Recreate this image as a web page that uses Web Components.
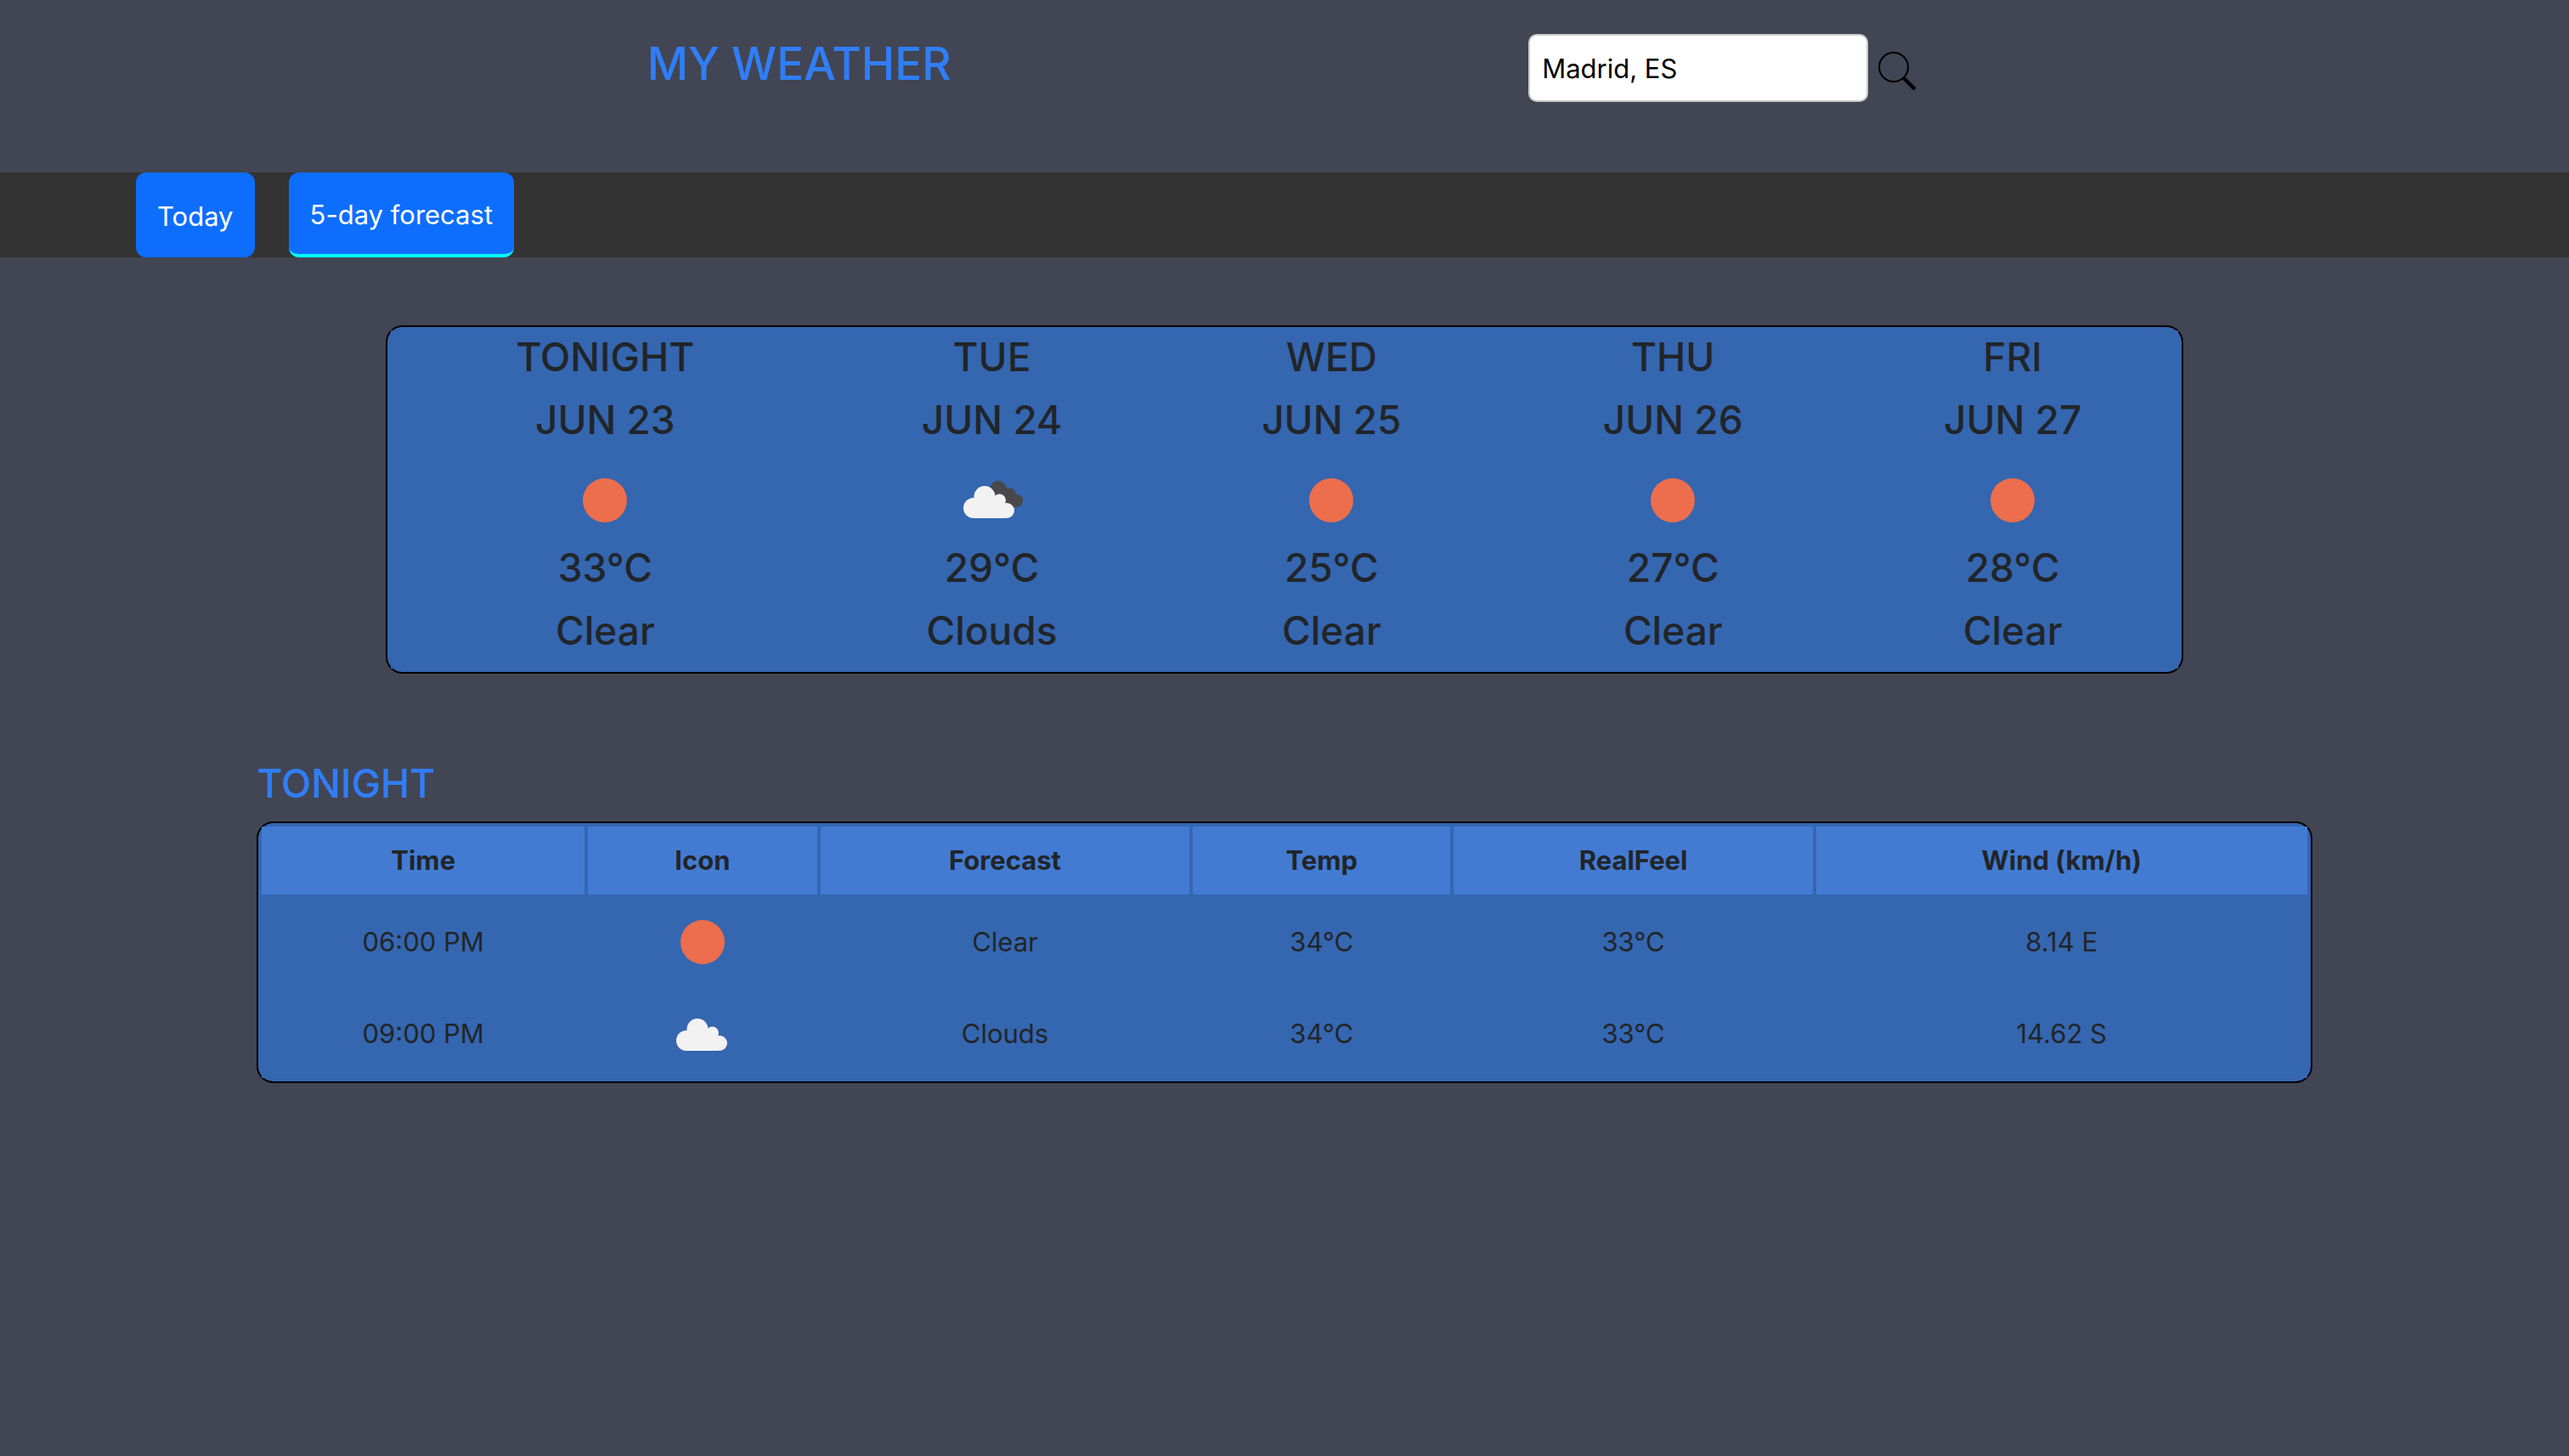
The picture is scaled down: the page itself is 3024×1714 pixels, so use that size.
<!DOCTYPE html>
<html lang="en">
<head>
<meta charset="utf-8">
<meta name="viewport" content="width=device-width, initial-scale=1">
<title>My Weather</title>
<style>
  html, body { margin: 0; min-height: 100%; }
  body {
    background: #424553;
    color: #212529;
    font-family: Inter, "Liberation Sans", sans-serif;
    font-size: 31px;
    line-height: 48px;
    --accent: #307ef6;
    --panel: #3566b0;
    --panel-head: #437bd3;
    --button: #0d6efd;
  }
</style>
</head>
<body>
<weather-app></weather-app>

<script>
class BaseElement extends HTMLElement {
  connectedCallback() {
    if (!this.shadowRoot) {
      this.attachShadow({ mode: "open" }).innerHTML = this.render();
    }
  }
}

class WeatherIcon extends BaseElement {
  render() {
    const cloud = `
      <circle cx="12" cy="26" r="12"/>
      <circle cx="25" cy="12.500" r="12.500"/>
      <circle cx="42.500" cy="17" r="7.500"/>
      <circle cx="51" cy="29" r="9"/>
      <path d="M12 15H38L49 20V38H12z"/>`;
    const art = {
      clear: `<circle cx="50" cy="50" r="26" fill="#ec6e4c"/>`,
      clouds: `<g transform="translate(19 32)" fill="#f2f2f2">${cloud}</g>`,
      broken: `
        <g fill="#48484a">
          <circle cx="57" cy="36.500" r="9.500"/>
          <circle cx="71" cy="42" r="6.500"/>
          <circle cx="78.500" cy="50.500" r="7.500"/>
          <path d="M50 42L66 34L80 46L78 58H70z"/>
        </g>
        <g transform="translate(16 33)" fill="#f2f2f2">${cloud}</g>`
    };
    return `
      <style>
        :host { display: block; width: 100px; height: 100px; margin: 0 auto; }
        svg { display: block; width: 100%; height: 100%; }
      </style>
      <svg viewBox="0 0 100 100" aria-hidden="true">${art[this.getAttribute("kind")]}</svg>`;
  }
}

class SearchBox extends BaseElement {
  render() {
    return `
      <style>
        :host { display: block; }
        form { display: flex; align-items: center; gap: 8px; margin: 0; }
        input {
          box-sizing: border-box; width: 400px; height: 80px; padding: 0 14px;
          border: 2px solid #ccc; border-radius: 10px;
          background: #fff; color: #000; font: inherit;
        }
        button { padding: 0; border: 0; background: none; cursor: pointer; }
        svg { display: block; width: 52px; height: 52px; }
      </style>
      <form onsubmit="return false">
        <input id="city" type="text" value="Madrid, ES" aria-label="City">
        <button type="submit" aria-label="Search">
          <svg viewBox="0 0 52 52" fill="none" stroke="#000">
            <circle cx="22" cy="25" r="17" stroke-width="2"/>
            <path d="M33 37 L47 51" stroke-width="4.500"/>
          </svg>
        </button>
      </form>`;
  }
}

class SiteHeader extends BaseElement {
  render() {
    return `
      <style>
        :host { display: block; }
        header {
          display: grid; grid-template-columns: 143fr 102fr;
          padding: 40px 0 83px 82px;
        }
        h1 {
          margin: 0; text-align: center; color: var(--accent);
          font-size: 53px; line-height: 70px; font-weight: 500;
        }
      </style>
      <header>
        <h1>MY WEATHER</h1>
        <search-box></search-box>
      </header>`;
  }
}

class NavTab extends BaseElement {
  render() {
    return `
      <style>
        :host { display: flex; }
        button {
          box-sizing: border-box; height: 100px; padding: 4px 25px 0;
          border: 0; border-radius: 12px;
          background: var(--button); color: #fff; font: inherit; cursor: pointer;
        }
        :host([active]) button { border-bottom: 4px solid #0ff; }
      </style>
      <button type="button"><slot></slot></button>`;
  }
}

class SiteNav extends BaseElement {
  render() {
    return `
      <style>
        :host { display: block; background: #333; }
        nav { display: flex; gap: 40px; padding: 0 160px; }
      </style>
      <nav>
        <nav-tab>Today</nav-tab>
        <nav-tab active>5-day forecast</nav-tab>
      </nav>`;
  }
}

const TABLE_STYLE = `
  table {
    box-sizing: border-box; width: 100%; table-layout: fixed;
    border: 2px solid #000; border-radius: 20px;
    border-collapse: separate; border-spacing: 4px;
    background: var(--panel); text-align: center;
  }
  td { padding: 2px 0; background: var(--panel); }
  h2 { margin: 0 0 16px; font-size: 46px; line-height: 58px; font-weight: 500; }`;

class DaySummary extends BaseElement {
  render() {
    const days = [
      ["TONIGHT", "JUN 23", "clear", "33°C", "Clear"],
      ["TUE", "JUN 24", "broken", "29°C", "Clouds"],
      ["WED", "JUN 25", "clear", "25°C", "Clear"],
      ["THU", "JUN 26", "clear", "27°C", "Clear"],
      ["FRI", "JUN 27", "clear", "28°C", "Clear"]
    ];
    const widths = [24.2, 19, 18.9, 19.2, 18.7];
    return `
      <style>
        :host { display: block; width: 70%; margin: 80px auto 0; }
        ${TABLE_STYLE}
        td { padding-bottom: 0; }
      </style>
      <table>
        <colgroup>${widths.map(w => `<col style="width:${w}%">`).join("")}</colgroup>
        <tr>${days.map(([day, date, icon, temp, sky]) => `
          <td>
            <h2>${day}</h2>
            <h2>${date}</h2>
            <weather-icon kind="${icon}"></weather-icon>
            <h2>${temp}</h2>
            <h2>${sky}</h2>
          </td>`).join("")}
        </tr>
      </table>`;
  }
}

class HourlyForecast extends BaseElement {
  render() {
    const heads = ["Time", "Icon", "Forecast", "Temp", "RealFeel", "Wind (km/h)"];
    const rows = [
      ["06:00 PM", "clear", "Clear", "34°C", "33°C", "8.14 E"],
      ["09:00 PM", "clouds", "Clouds", "34°C", "33°C", "14.62 S"]
    ];
    const widths = [15.9, 11.3, 18.2, 12.7, 17.7, 24.2];
    return `
      <style>
        :host { display: block; width: 80%; margin: 100px auto 0; }
        ${TABLE_STYLE}
        h2 { color: var(--accent); }
        th { padding: 16px; background: var(--panel-head); font-weight: 700; }
      </style>
      <h2><slot></slot></h2>
      <table>
        <colgroup>${widths.map(w => `<col style="width:${w}%">`).join("")}</colgroup>
        <thead><tr>${heads.map(h => `<th scope="col">${h}</th>`).join("")}</tr></thead>
        <tbody>${rows.map(r => `
          <tr>${r.map((v, i) => i === 1
            ? `<td><weather-icon kind="${v}"></weather-icon></td>`
            : `<td>${v}</td>`).join("")}</tr>`).join("")}
        </tbody>
      </table>`;
  }
}

class WeatherApp extends BaseElement {
  render() {
    return `
      <style>:host { display: block; }</style>
      <site-header></site-header>
      <site-nav></site-nav>
      <main>
        <day-summary></day-summary>
        <hourly-forecast>TONIGHT</hourly-forecast>
      </main>`;
  }
}

customElements.define("weather-icon", WeatherIcon);
customElements.define("search-box", SearchBox);
customElements.define("nav-tab", NavTab);
customElements.define("site-header", SiteHeader);
customElements.define("site-nav", SiteNav);
customElements.define("day-summary", DaySummary);
customElements.define("hourly-forecast", HourlyForecast);
customElements.define("weather-app", WeatherApp);
</script>
</body>
</html>
